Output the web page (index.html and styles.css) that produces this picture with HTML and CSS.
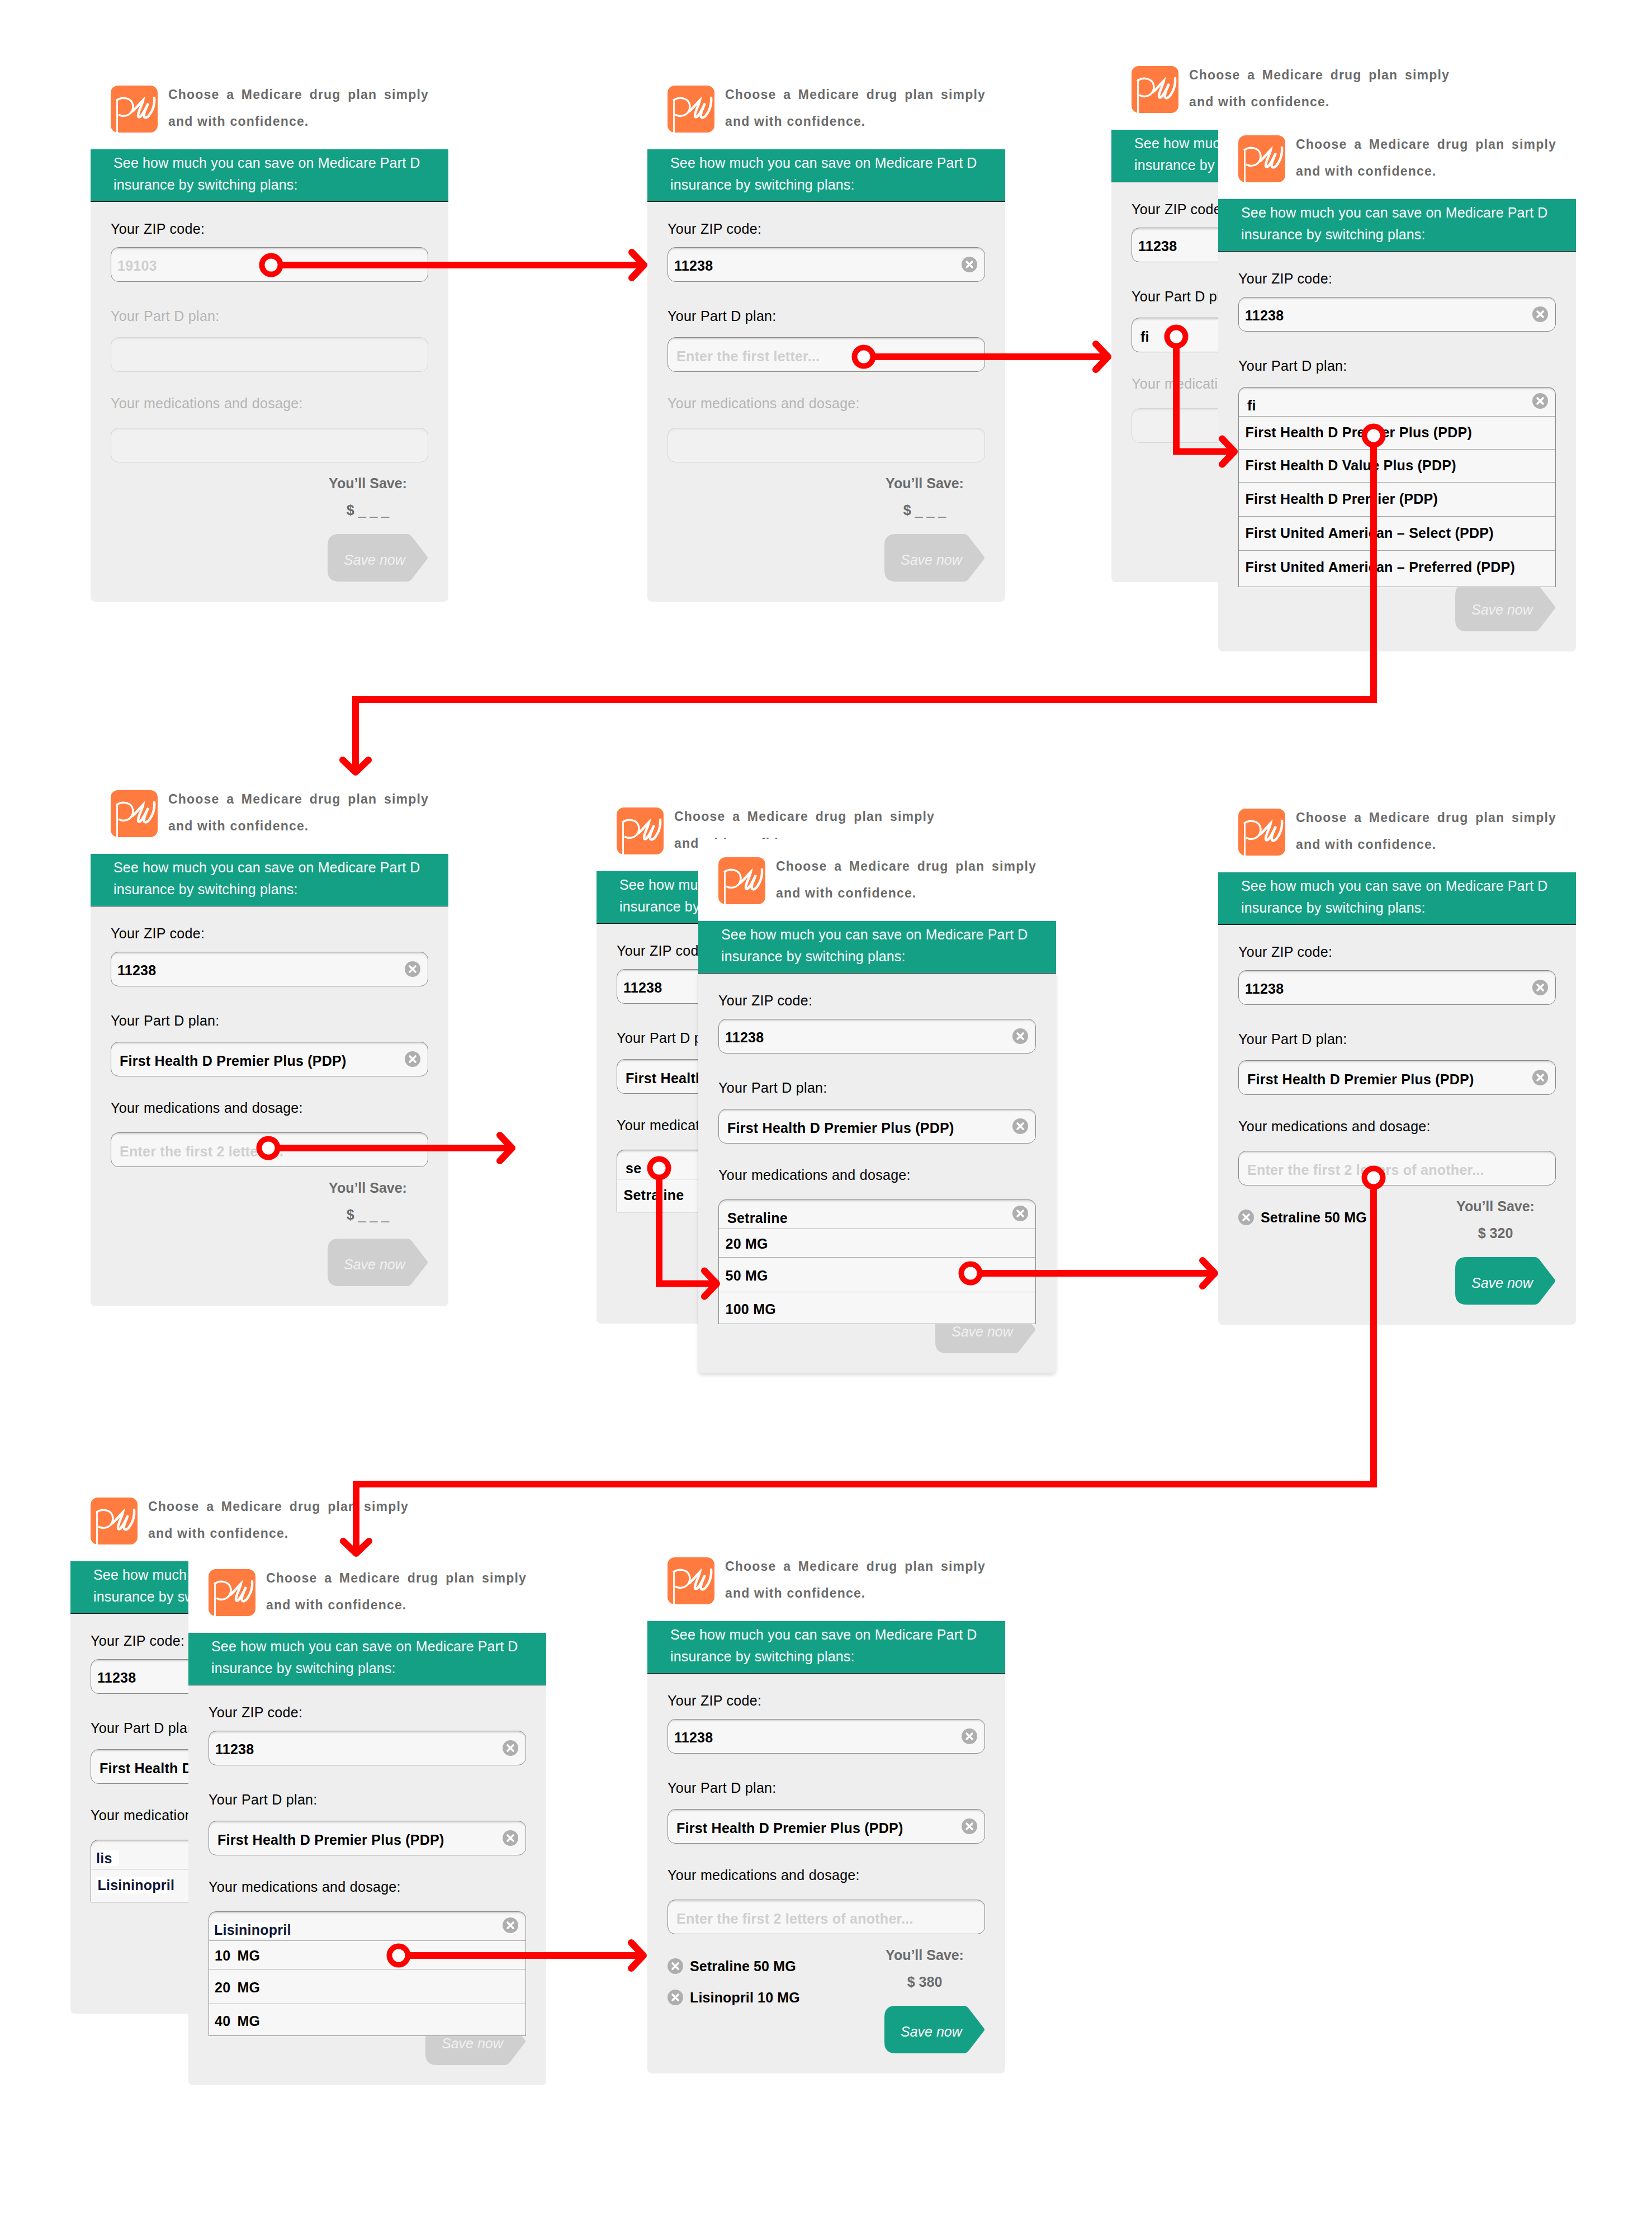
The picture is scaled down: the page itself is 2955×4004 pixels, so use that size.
FILE: index.html
```html
<!DOCTYPE html>
<html lang="en">
<head>
<meta charset="UTF-8" />
<title>Medicare drug plan flow</title>
<link rel="stylesheet" href="styles.css">
</head>
<body>
<svg class="defs" aria-hidden="true">
<symbol id="pw" viewBox="0 0 84 84">
<rect width="84" height="84" rx="13" fill="#ff7b3f" />
<path d="M11.5 24V84" fill="none" stroke="#fff" stroke-width="2.8" />
<path d="M10 27C20 19 38 21 40 36C41 50 27 59 14 52" fill="none" stroke="#fff" stroke-width="3.4" />
<path d="M39 46C46 40 52 32 58 26C56 36 49 46 49 54C49 58 53 57 56 52C60 47 63 40 67 32C64 40 58 50 60 56C62 59 67 57 71 50C75 44 79 34 78 22" fill="none" stroke="#fff" stroke-width="4.4" stroke-linecap="round" />
</symbol>
<symbol id="clear" viewBox="0 0 28 28">
<circle cx="14" cy="14" r="14" fill="#aeaeae" />
<path d="M9 9L19 19M19 9L9 19" stroke="#fff" stroke-width="3.6" stroke-linecap="round" />
</symbol>
</svg>

<!-- row 1 -->
<section class="frame at-a1">
<header class="brand"><svg class="brand-logo"><use href="#pw" /></svg><p class="brand-text">Choose a Medicare drug plan simply and with confidence.</p></header>
<h2 class="banner">See how much you can save on Medicare Part D<br>insurance by switching plans:</h2>
<div class="panel">
<div class="field field-zip"><div class="field-label">Your ZIP code:</div><div class="input"><span class="value zip ph">19103</span></div></div>
<div class="field field-plan off"><div class="field-label">Your Part D plan:</div><div class="input"></div></div>
<div class="field field-med off"><div class="field-label">Your medications and dosage:</div><div class="input"></div></div>
<div class="summary">
<div class="picked"></div>
<div class="savings"><div class="total">You’ll Save:<br>$ <span class="blank">_ _ _</span></div><div class="save-btn">Save now</div></div>
</div>
</div>
</section>

<section class="frame at-a2">
<header class="brand"><svg class="brand-logo"><use href="#pw" /></svg><p class="brand-text">Choose a Medicare drug plan simply and with confidence.</p></header>
<h2 class="banner">See how much you can save on Medicare Part D<br>insurance by switching plans:</h2>
<div class="panel">
<div class="field field-zip"><div class="field-label">Your ZIP code:</div><div class="input"><span class="value zip">11238</span><svg class="clear"><use href="#clear" /></svg></div></div>
<div class="field field-plan"><div class="field-label">Your Part D plan:</div><div class="input"><span class="value ph">Enter the first letter...</span></div></div>
<div class="field field-med off"><div class="field-label">Your medications and dosage:</div><div class="input"></div></div>
<div class="summary">
<div class="picked"></div>
<div class="savings"><div class="total">You’ll Save:<br>$ <span class="blank">_ _ _</span></div><div class="save-btn">Save now</div></div>
</div>
</div>
</section>

<section class="frame at-a3">
<header class="brand"><svg class="brand-logo"><use href="#pw" /></svg><p class="brand-text">Choose a Medicare drug plan simply and with confidence.</p></header>
<h2 class="banner">See how much you can save on Medicare Part D<br>insurance by switching plans:</h2>
<div class="panel">
<div class="field field-zip"><div class="field-label">Your ZIP code:</div><div class="input"><span class="value zip">11238</span></div></div>
<div class="field field-plan"><div class="field-label">Your Part D plan:</div><div class="input"><span class="value">fi</span></div></div>
<div class="field field-med off"><div class="field-label">Your medications and dosage:</div><div class="input"></div></div>
</div>
</section>

<section class="frame at-a4">
<header class="brand"><svg class="brand-logo"><use href="#pw" /></svg><p class="brand-text">Choose a Medicare drug plan simply and with confidence.</p></header>
<h2 class="banner">See how much you can save on Medicare Part D<br>insurance by switching plans:</h2>
<div class="panel">
<div class="field field-zip"><div class="field-label">Your ZIP code:</div><div class="input"><span class="value zip">11238</span><svg class="clear"><use href="#clear" /></svg></div></div>
<div class="field field-plan"><div class="field-label">Your Part D plan:</div>
<div class="combo">
<div class="input open"><span class="value">fi</span><svg class="clear"><use href="#clear" /></svg></div>
<div class="combo-list plans">
<div class="combo-row">First Health D Premier Plus (PDP)</div>
<div class="combo-row">First Health D Value Plus (PDP)</div>
<div class="combo-row">First Health D Premier (PDP)</div>
<div class="combo-row">First United American – Select (PDP)</div>
<div class="combo-row">First United American – Preferred (PDP)</div>
</div>
</div></div>
<div class="field field-med off"><div class="field-label">Your medications and dosage:</div><div class="input"></div></div>
<div class="summary">
<div class="picked"></div>
<div class="savings"><div class="total">You’ll Save:<br>$ <span class="blank">_ _ _</span></div><div class="save-btn">Save now</div></div>
</div>
</div>
</section>

<!-- row 2 -->
<section class="frame at-b1">
<header class="brand"><svg class="brand-logo"><use href="#pw" /></svg><p class="brand-text">Choose a Medicare drug plan simply and with confidence.</p></header>
<h2 class="banner">See how much you can save on Medicare Part D<br>insurance by switching plans:</h2>
<div class="panel">
<div class="field field-zip"><div class="field-label">Your ZIP code:</div><div class="input"><span class="value zip">11238</span><svg class="clear"><use href="#clear" /></svg></div></div>
<div class="field field-plan"><div class="field-label">Your Part D plan:</div><div class="input"><span class="value">First Health D Premier Plus (PDP)</span><svg class="clear"><use href="#clear" /></svg></div></div>
<div class="field field-med"><div class="field-label">Your medications and dosage:</div><div class="input"><span class="value ph">Enter the first 2 letters...</span></div></div>
<div class="summary">
<div class="picked"></div>
<div class="savings"><div class="total">You’ll Save:<br>$ <span class="blank">_ _ _</span></div><div class="save-btn">Save now</div></div>
</div>
</div>
</section>

<section class="frame at-b2">
<header class="brand"><svg class="brand-logo"><use href="#pw" /></svg><p class="brand-text">Choose a Medicare drug plan simply and with confidence.</p></header>
<h2 class="banner">See how much you can save on Medicare Part D<br>insurance by switching plans:</h2>
<div class="panel">
<div class="field field-zip"><div class="field-label">Your ZIP code:</div><div class="input"><span class="value zip">11238</span></div></div>
<div class="field field-plan"><div class="field-label">Your Part D plan:</div><div class="input"><span class="value">First Health D Premier Plus (PDP)</span></div></div>
<div class="field field-med"><div class="field-label">Your medications and dosage:</div>
<div class="combo">
<div class="input open"><span class="value">se</span></div>
<div class="combo-list"><div class="combo-row">Setraline</div></div>
</div></div>
</div>
</section>

<section class="frame at-b3">
<header class="brand"><svg class="brand-logo"><use href="#pw" /></svg><p class="brand-text">Choose a Medicare drug plan simply and with confidence.</p></header>
<h2 class="banner">See how much you can save on Medicare Part D<br>insurance by switching plans:</h2>
<div class="panel">
<div class="field field-zip"><div class="field-label">Your ZIP code:</div><div class="input"><span class="value zip">11238</span><svg class="clear"><use href="#clear" /></svg></div></div>
<div class="field field-plan"><div class="field-label">Your Part D plan:</div><div class="input"><span class="value">First Health D Premier Plus (PDP)</span><svg class="clear"><use href="#clear" /></svg></div></div>
<div class="field field-med"><div class="field-label">Your medications and dosage:</div>
<div class="combo">
<div class="input open"><span class="value">Setraline</span><svg class="clear"><use href="#clear" /></svg></div>
<div class="combo-list doses">
<div class="combo-row">20 MG</div>
<div class="combo-row">50 MG</div>
<div class="combo-row">100 MG</div>
</div>
</div></div>
<div class="summary">
<div class="picked"></div>
<div class="savings"><div class="total">You’ll Save:<br>$ <span class="blank">_ _ _</span></div><div class="save-btn">Save now</div></div>
</div>
</div>
</section>

<section class="frame at-b4">
<header class="brand"><svg class="brand-logo"><use href="#pw" /></svg><p class="brand-text">Choose a Medicare drug plan simply and with confidence.</p></header>
<h2 class="banner">See how much you can save on Medicare Part D<br>insurance by switching plans:</h2>
<div class="panel">
<div class="field field-zip"><div class="field-label">Your ZIP code:</div><div class="input"><span class="value zip">11238</span><svg class="clear"><use href="#clear" /></svg></div></div>
<div class="field field-plan"><div class="field-label">Your Part D plan:</div><div class="input"><span class="value">First Health D Premier Plus (PDP)</span><svg class="clear"><use href="#clear" /></svg></div></div>
<div class="field field-med"><div class="field-label">Your medications and dosage:</div><div class="input"><span class="value ph">Enter the first 2 letters of another...</span></div></div>
<div class="summary">
<div class="picked">
<div class="picked-item"><svg class="clear"><use href="#clear" /></svg>Setraline 50 MG</div>
</div>
<div class="savings"><div class="total">You’ll Save:<br>$ 320</div><div class="save-btn on">Save now</div></div>
</div>
</div>
</section>

<!-- row 3 -->
<section class="frame at-c1">
<header class="brand"><svg class="brand-logo"><use href="#pw" /></svg><p class="brand-text">Choose a Medicare drug plan simply and with confidence.</p></header>
<h2 class="banner">See how much you can save on Medicare Part D<br>insurance by switching plans:</h2>
<div class="panel">
<div class="field field-zip"><div class="field-label">Your ZIP code:</div><div class="input"><span class="value zip">11238</span></div></div>
<div class="field field-plan"><div class="field-label">Your Part D plan:</div><div class="input"><span class="value">First Health D Premier Plus (PDP)</span></div></div>
<div class="field field-med"><div class="field-label">Your medications and dosage:</div>
<div class="combo">
<div class="input open"><span class="value tight"><span class="autofill short">lis</span></span></div>
<div class="combo-list"><div class="combo-row"><span class="autofill">Lisininopril</span></div></div>
</div></div>
</div>
</section>

<section class="frame at-c2">
<header class="brand"><svg class="brand-logo"><use href="#pw" /></svg><p class="brand-text">Choose a Medicare drug plan simply and with confidence.</p></header>
<h2 class="banner">See how much you can save on Medicare Part D<br>insurance by switching plans:</h2>
<div class="panel">
<div class="field field-zip"><div class="field-label">Your ZIP code:</div><div class="input"><span class="value zip">11238</span><svg class="clear"><use href="#clear" /></svg></div></div>
<div class="field field-plan"><div class="field-label">Your Part D plan:</div><div class="input"><span class="value">First Health D Premier Plus (PDP)</span><svg class="clear"><use href="#clear" /></svg></div></div>
<div class="field field-med"><div class="field-label">Your medications and dosage:</div>
<div class="combo">
<div class="input open"><span class="value tight"><span class="autofill">Lisininopril</span></span><svg class="clear"><use href="#clear" /></svg></div>
<div class="combo-list doses wide-gap">
<div class="combo-row">10 MG</div>
<div class="combo-row">20 MG</div>
<div class="combo-row">40 MG</div>
</div>
</div></div>
<div class="summary">
<div class="picked"></div>
<div class="savings"><div class="total">You’ll Save:<br>$ 320</div><div class="save-btn">Save now</div></div>
</div>
</div>
</section>

<section class="frame at-c3">
<header class="brand"><svg class="brand-logo"><use href="#pw" /></svg><p class="brand-text">Choose a Medicare drug plan simply and with confidence.</p></header>
<h2 class="banner">See how much you can save on Medicare Part D<br>insurance by switching plans:</h2>
<div class="panel">
<div class="field field-zip"><div class="field-label">Your ZIP code:</div><div class="input"><span class="value zip">11238</span><svg class="clear"><use href="#clear" /></svg></div></div>
<div class="field field-plan"><div class="field-label">Your Part D plan:</div><div class="input"><span class="value">First Health D Premier Plus (PDP)</span><svg class="clear"><use href="#clear" /></svg></div></div>
<div class="field field-med"><div class="field-label">Your medications and dosage:</div><div class="input"><span class="value ph">Enter the first 2 letters of another...</span></div></div>
<div class="summary">
<div class="picked">
<div class="picked-item"><svg class="clear"><use href="#clear" /></svg>Setraline 50 MG</div>
<div class="picked-item"><svg class="clear"><use href="#clear" /></svg>Lisinopril 10 MG</div>
</div>
<div class="savings"><div class="total">You’ll Save:<br>$ 380</div><div class="save-btn on">Save now</div></div>
</div>
</div>
</section>

<!-- arrows between the screens -->
<svg class="flow" viewBox="0 0 2955 4004">
<g class="flow-line">
<path d="M485 474H1150" />
<path d="M1545 638H1980" />
<path d="M2104 602V807.5H2206" />
<path d="M2457 779V1251H636V1379" />
<path d="M480 2053H914" />
<path d="M1179 2089V2295.5H1280" />
<path d="M1736 2277H2171" />
<path d="M2457 2106V2654H637V2776" />
<path d="M713 3497H1149" />
</g>
<g class="flow-head">
<path d="M1130 451L1152 474L1130 497" />
<path d="M1960 615L1982 638L1960 661" />
<path d="M2186 784.5L2208 807.5L2186 830.5" />
<path d="M613 1359L636 1381L659 1359" />
<path d="M894 2030L916 2053L894 2076" />
<path d="M1260 2272.5L1282 2295.5L1260 2318.5" />
<path d="M2151 2254L2173 2277L2151 2300" />
<path d="M614 2756L637 2778L660 2756" />
<path d="M1129 3474L1151 3497L1129 3520" />
</g>
<g class="flow-node">
<circle cx="485" cy="474" r="16.5" />
<circle cx="1545" cy="638" r="16.5" />
<circle cx="2104" cy="602" r="16.5" />
<circle cx="2457" cy="779" r="16.5" />
<circle cx="480" cy="2053" r="16.5" />
<circle cx="1179" cy="2089" r="16.5" />
<circle cx="1736" cy="2277" r="16.5" />
<circle cx="2457" cy="2106" r="16.5" />
<circle cx="713" cy="3497" r="16.5" />
</g>
</svg>
</body>
</html>
```

FILE: styles.css
```css
body {
  margin: 0;
  width: 2955px;
  height: 4004px;
  position: relative;
  overflow: hidden;
  background: #fff;
  font-family: "Liberation Sans", Arial, sans-serif;
  font-size: 25px;
  color: #000;
}

.defs {
  position: absolute;
  width: 0;
  height: 0;
}

.frame {
  position: absolute;
  isolation: isolate;
  width: 640px;
  background: #fff;
}

.at-a1 { left: 162px; top: 120px; }
.at-a2 { left: 1158px; top: 120px; }
.at-a3 { left: 1988px; top: 85px; }
.at-a4 { left: 2179px; top: 209px; }
.at-b1 { left: 162px; top: 1380px; }
.at-b2 { left: 1067px; top: 1411px; }
.at-b3 { left: 1249px; top: 1500px; }
.at-b4 { left: 2179px; top: 1413px; }
.at-c1 { left: 126px; top: 2645px; }
.at-c2 { left: 337px; top: 2773px; }
.at-c3 { left: 1158px; top: 2752px; }

.at-b3 .panel { box-shadow: 0 3px 6px rgba(0, 0, 0, 0.15); }

.brand {
  display: flex;
  gap: 19px;
  height: 147px;
  box-sizing: border-box;
  padding: 25px 0 0 36px;
}

.brand-logo {
  width: 84px;
  height: 84px;
  margin-top: 8px;
  flex: none;
}

.brand-text {
  width: 466px;
  margin: 0;
  font-size: 23px;
  font-weight: bold;
  line-height: 48px;
  letter-spacing: 1.2px;
  text-align: justify;
  color: #6b6b6b;
}

.banner {
  margin: 0;
  height: 88px;
  padding: 5px 0 0 41px;
  background: #14a085;
  border-bottom: 1.5px solid #111;
  color: #fff;
  font-size: 25px;
  font-weight: normal;
  line-height: 39px;
  letter-spacing: 0.15px;
}

.panel {
  position: relative;
  height: 715px;
  box-sizing: border-box;
  padding: 31px 36px 0;
  background: #eee;
  border-radius: 0 0 8px 8px;
}

.field-label {
  height: 34px;
  line-height: 34px;
  margin-bottom: 16px;
  letter-spacing: 0.3px;
}

.field-zip { margin-bottom: 44px; }
.field-plan { margin-bottom: 39px; }
.field-plan .field-label { margin-bottom: 21px; }
.field-med { margin-bottom: 13px; }
.field-med .field-label { margin-bottom: 27px; }

.field.off .field-label { color: #b5b5b5; }

.input {
  display: flex;
  align-items: center;
  justify-content: space-between;
  height: 62px;
  box-sizing: border-box;
  padding: 0 13px 0 15px;
  background: #f7f7f7;
  border: 1.5px solid #8a8a8a;
  border-radius: 14px;
  box-shadow: inset 0 4px 3px -2px #ccc;
}

.field.off .input {
  background: #f1f1f1;
  border-color: #d6d6d6;
  box-shadow: inset 0 4px 3px -2px #e2e2e2;
}

.value {
  padding-top: 6px;
  font-weight: bold;
  letter-spacing: 0.25px;
  white-space: nowrap;
}

.value.zip {
  margin-left: -4px;
  padding-top: 4px;
}

.value.tight { margin-left: -6px; }

.value.ph { color: #cfcfcf; }

.clear {
  width: 28px;
  height: 28px;
  flex: none;
}

.combo {
  position: relative;
  height: 62px;
}

.input.open {
  height: 52px;
  border-bottom: 0;
  border-radius: 14px 14px 0 0;
}

.input.open .value { padding-top: 14px; }
.input.open .clear { margin-top: -4px; }

.combo-list {
  position: absolute;
  left: 0;
  right: 0;
  top: 52px;
  z-index: 2;
  background: #f7f7f7;
  border: 1.5px solid #8a8a8a;
  border-top: 0;
}

.combo-row {
  display: flex;
  align-items: center;
  height: 59px;
  box-sizing: border-box;
  padding: 0 0 2px 11.5px;
  border-top: 1.5px solid #a8a8a8;
  font-weight: bold;
  letter-spacing: 0.25px;
  white-space: nowrap;
}

.plans .combo-row:nth-child(n+3) { height: 61px; }
.plans .combo-row:last-child { height: 65px; padding-bottom: 6px; }

.doses .combo-row { height: 57px; padding-top: 4px; padding-bottom: 0; }
.doses .combo-row:first-child { height: 51px; padding-top: 3px; }
.doses .combo-row:nth-child(2) { height: 62px; padding-top: 4px; }

.wide-gap .combo-row { word-spacing: 5px; padding-left: 10px; }

.autofill {
  margin-left: -4px;
  padding: 0 4px;
  background: linear-gradient(#fff, #fff) no-repeat;
  background-size: 88% 100%;
  color: #101a3a;
}

.autofill.short {
  padding-right: 20px;
  background-position: 13px 0;
  background-size: 32px 100%;
}

.summary {
  display: flex;
  justify-content: space-between;
}

.picked { padding-top: 16px; }

.picked-item {
  display: flex;
  align-items: center;
  gap: 12px;
  height: 56px;
  font-weight: bold;
  letter-spacing: 0.15px;
}

.savings {
  display: flex;
  flex-direction: column;
  width: 180px;
}

.total {
  width: 144px;
  text-align: center;
  font-weight: bold;
  line-height: 48px;
  color: #6b6b6b;
}

.blank {
  font-weight: normal;
  color: #8c8c8c;
}

.save-btn {
  width: 180px;
  height: 85px;
  margin-top: 19px;
  box-sizing: border-box;
  padding: 7px 0 0 29px;
  line-height: 78px;
  background: #cfcfcf;
  color: #f1f1f1;
  font-style: italic;
  clip-path: path("M20 0H142Q147 0 151 5L178 40Q180 42.5 178 45L151 80Q147 85 142 85H20Q0 85 0 65V20Q0 0 20 0Z");
}

.save-btn.on {
  background: #14a085;
  color: #fff;
}

.flow {
  position: absolute;
  left: 0;
  top: 0;
  width: 2955px;
  height: 4004px;
}

.flow-line path {
  fill: none;
  stroke: #f00;
  stroke-width: 12;
}

.flow-head path {
  fill: none;
  stroke: #f00;
  stroke-width: 12;
  stroke-linecap: round;
  stroke-linejoin: round;
}

.flow-node circle {
  fill: #fff;
  stroke: #f00;
  stroke-width: 10;
}
```
